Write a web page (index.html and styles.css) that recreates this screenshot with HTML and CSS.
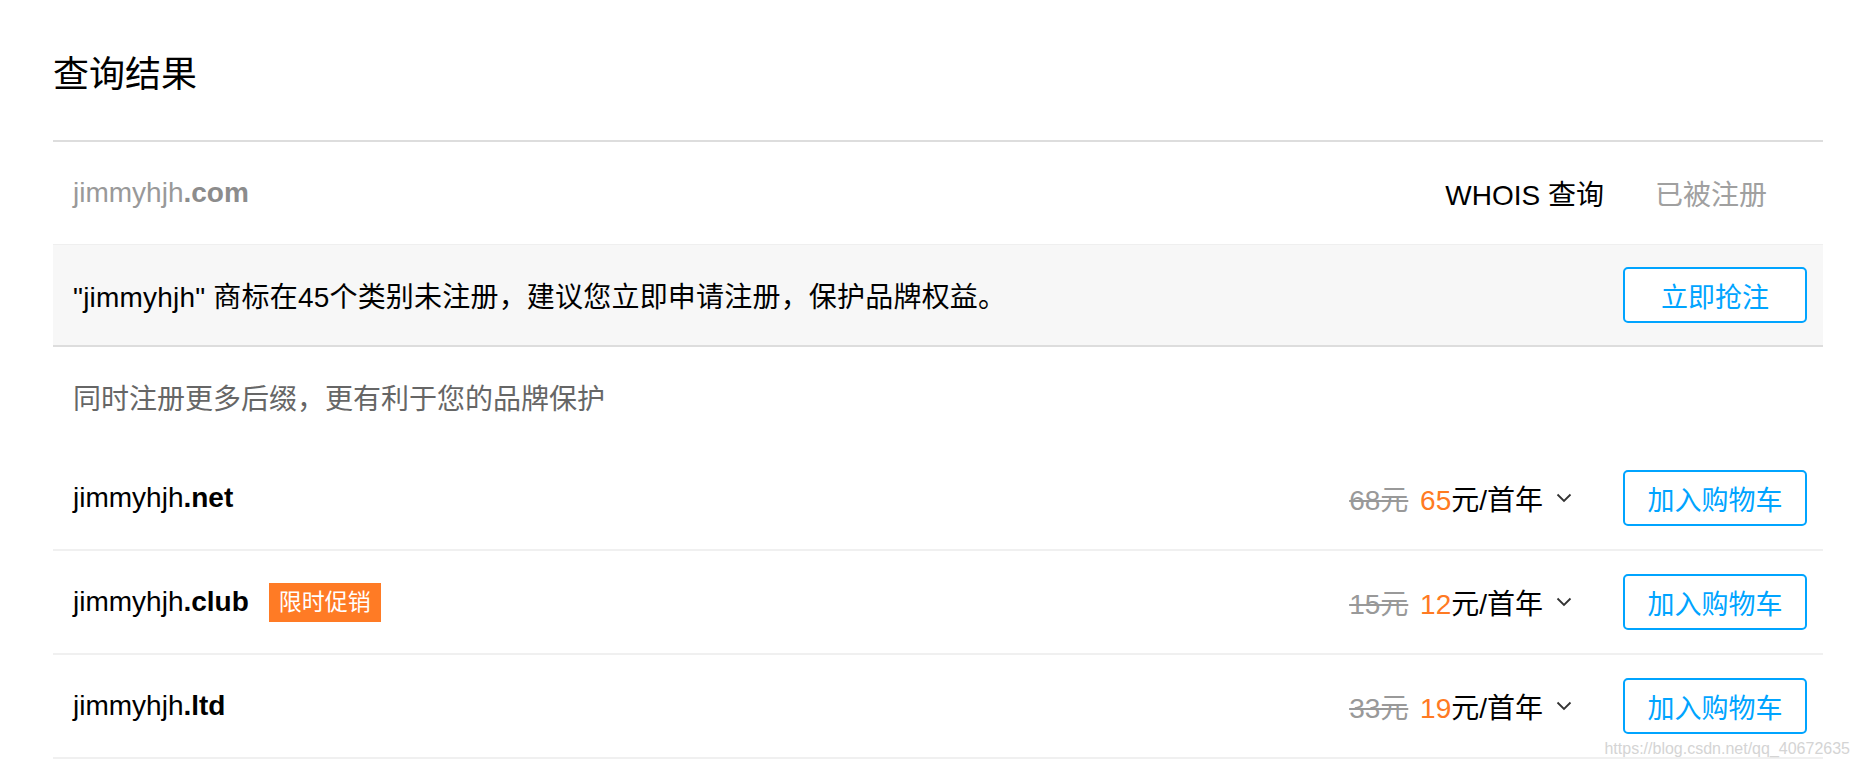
FILE: index.html
```html
<!DOCTYPE html>
<html lang="zh-CN">
<head>
<meta charset="utf-8">
<title>查询结果</title>
<link rel="stylesheet" href="styles.css">
</head>
<body>
<div class="page">
  <h1 class="title">查询结果</h1>
  <div class="result">
    <div class="domain-row">
      <span class="domain muted">jimmyhjh<b>.com</b></span>
      <div class="domain-actions">
        <span class="whois">WHOIS 查询</span>
        <span class="status">已被注册</span>
      </div>
    </div>
    <div class="notice">
      <span class="notice-text">"jimmyhjh" 商标在45个类别未注册，建议您立即申请注册，保护品牌权益。</span>
      <button class="btn">立即抢注</button>
    </div>
    <div class="subtitle">同时注册更多后缀，更有利于您的品牌保护</div>
    <div class="item">
      <div class="item-name"><span class="domain">jimmyhjh<b>.net</b></span></div>
      <div class="item-right">
        <span class="price"><s class="old">68元</s> <span class="now">65</span>元/首年</span>
        <svg class="chev" width="16" height="10" viewBox="0 0 16 10"><polyline points="1.5,1.5 8,8 14.5,1.5" fill="none" stroke="#333" stroke-width="1.8"/></svg>
        <button class="btn">加入购物车</button>
      </div>
    </div>
    <div class="item">
      <div class="item-name"><span class="domain">jimmyhjh<b>.club</b></span><span class="badge">限时促销</span></div>
      <div class="item-right">
        <span class="price"><s class="old">15元</s> <span class="now">12</span>元/首年</span>
        <svg class="chev" width="16" height="10" viewBox="0 0 16 10"><polyline points="1.5,1.5 8,8 14.5,1.5" fill="none" stroke="#333" stroke-width="1.8"/></svg>
        <button class="btn">加入购物车</button>
      </div>
    </div>
    <div class="item">
      <div class="item-name"><span class="domain">jimmyhjh<b>.ltd</b></span></div>
      <div class="item-right">
        <span class="price"><s class="old">33元</s> <span class="now">19</span>元/首年</span>
        <svg class="chev" width="16" height="10" viewBox="0 0 16 10"><polyline points="1.5,1.5 8,8 14.5,1.5" fill="none" stroke="#333" stroke-width="1.8"/></svg>
        <button class="btn">加入购物车</button>
      </div>
    </div>
  </div>
</div>
<div class="watermark">https://blog.csdn.net/qq_40672635</div>
</body>
</html>
```
FILE: styles.css
```css
* { box-sizing: border-box; }
html, body {
  margin: 0;
  padding: 0;
  background: #fff;
}
body {
  font-family: "Liberation Sans", "Noto Sans CJK SC", sans-serif;
  color: #000;
  width: 1860px;
  height: 766px;
  overflow: hidden;
  position: relative;
}
.page {
  padding: 0 37px 0 53px;
}
.title {
  margin: 0;
  font-size: 36px;
  font-weight: normal;
  line-height: 50px;
  padding: 50px 0 40px;
  height: 140px;
  color: #000;
}
.result {
  border-top: 2px solid #ddd;
}
.domain-row {
  height: 103px;
  display: flex;
  align-items: center;
  justify-content: space-between;
  padding: 0 56px 0 20px;
  font-size: 28px;
  border-bottom: 1px solid #efefef;
}
.muted { color: #999; }
.muted b { color: #8c8c8c; }
.domain b { font-weight: bold; }
.domain-actions {
  display: flex;
  align-items: center;
  gap: 51px;
}
.whois { color: #000; }
.status { color: #a0a0a0; }
.notice {
  height: 102px;
  display: flex;
  align-items: center;
  justify-content: space-between;
  padding: 0 16px 0 20px;
  background: #f7f7f7;
  border-bottom: 2px solid #ddd;
  font-size: 28px;
}
.notice-text { letter-spacing: 0.2px; }
.btn {
  width: 184px;
  height: 56px;
  border: 2px solid #00a4ff;
  border-radius: 5px;
  background: #fff;
  color: #00a4ff;
  font-family: "Liberation Sans", "Noto Sans CJK SC", sans-serif;
  font-size: 27px;
  padding: 0;
  display: flex;
  align-items: center;
  justify-content: center;
}
.subtitle {
  height: 100px;
  display: flex;
  align-items: center;
  padding-left: 20px;
  font-size: 28px;
  color: #666;
}
.item {
  height: 104px;
  display: flex;
  align-items: center;
  justify-content: space-between;
  padding: 0 16px 0 20px;
  border-bottom: 2px solid #f0f0f0;
  font-size: 28px;
}
.item-name {
  display: flex;
  align-items: center;
}
.badge {
  margin-left: 20px;
  height: 39px;
  line-height: 39px;
  padding: 0 10px;
  background: #ff7b25;
  color: #fff;
  font-size: 23px;
}
.item-right {
  display: flex;
  align-items: center;
}
.price { color: #000; }
.old {
  color: #999;
  margin-right: 4px;
}
.now { color: #ff7a22; }
.chev {
  margin-left: 13px;
  margin-right: 51px;
}
.watermark {
  position: absolute;
  right: 10px;
  top: 740px;
  font-size: 16px;
  color: #d4d4d4;
  font-family: "Liberation Sans", sans-serif;
}
```
